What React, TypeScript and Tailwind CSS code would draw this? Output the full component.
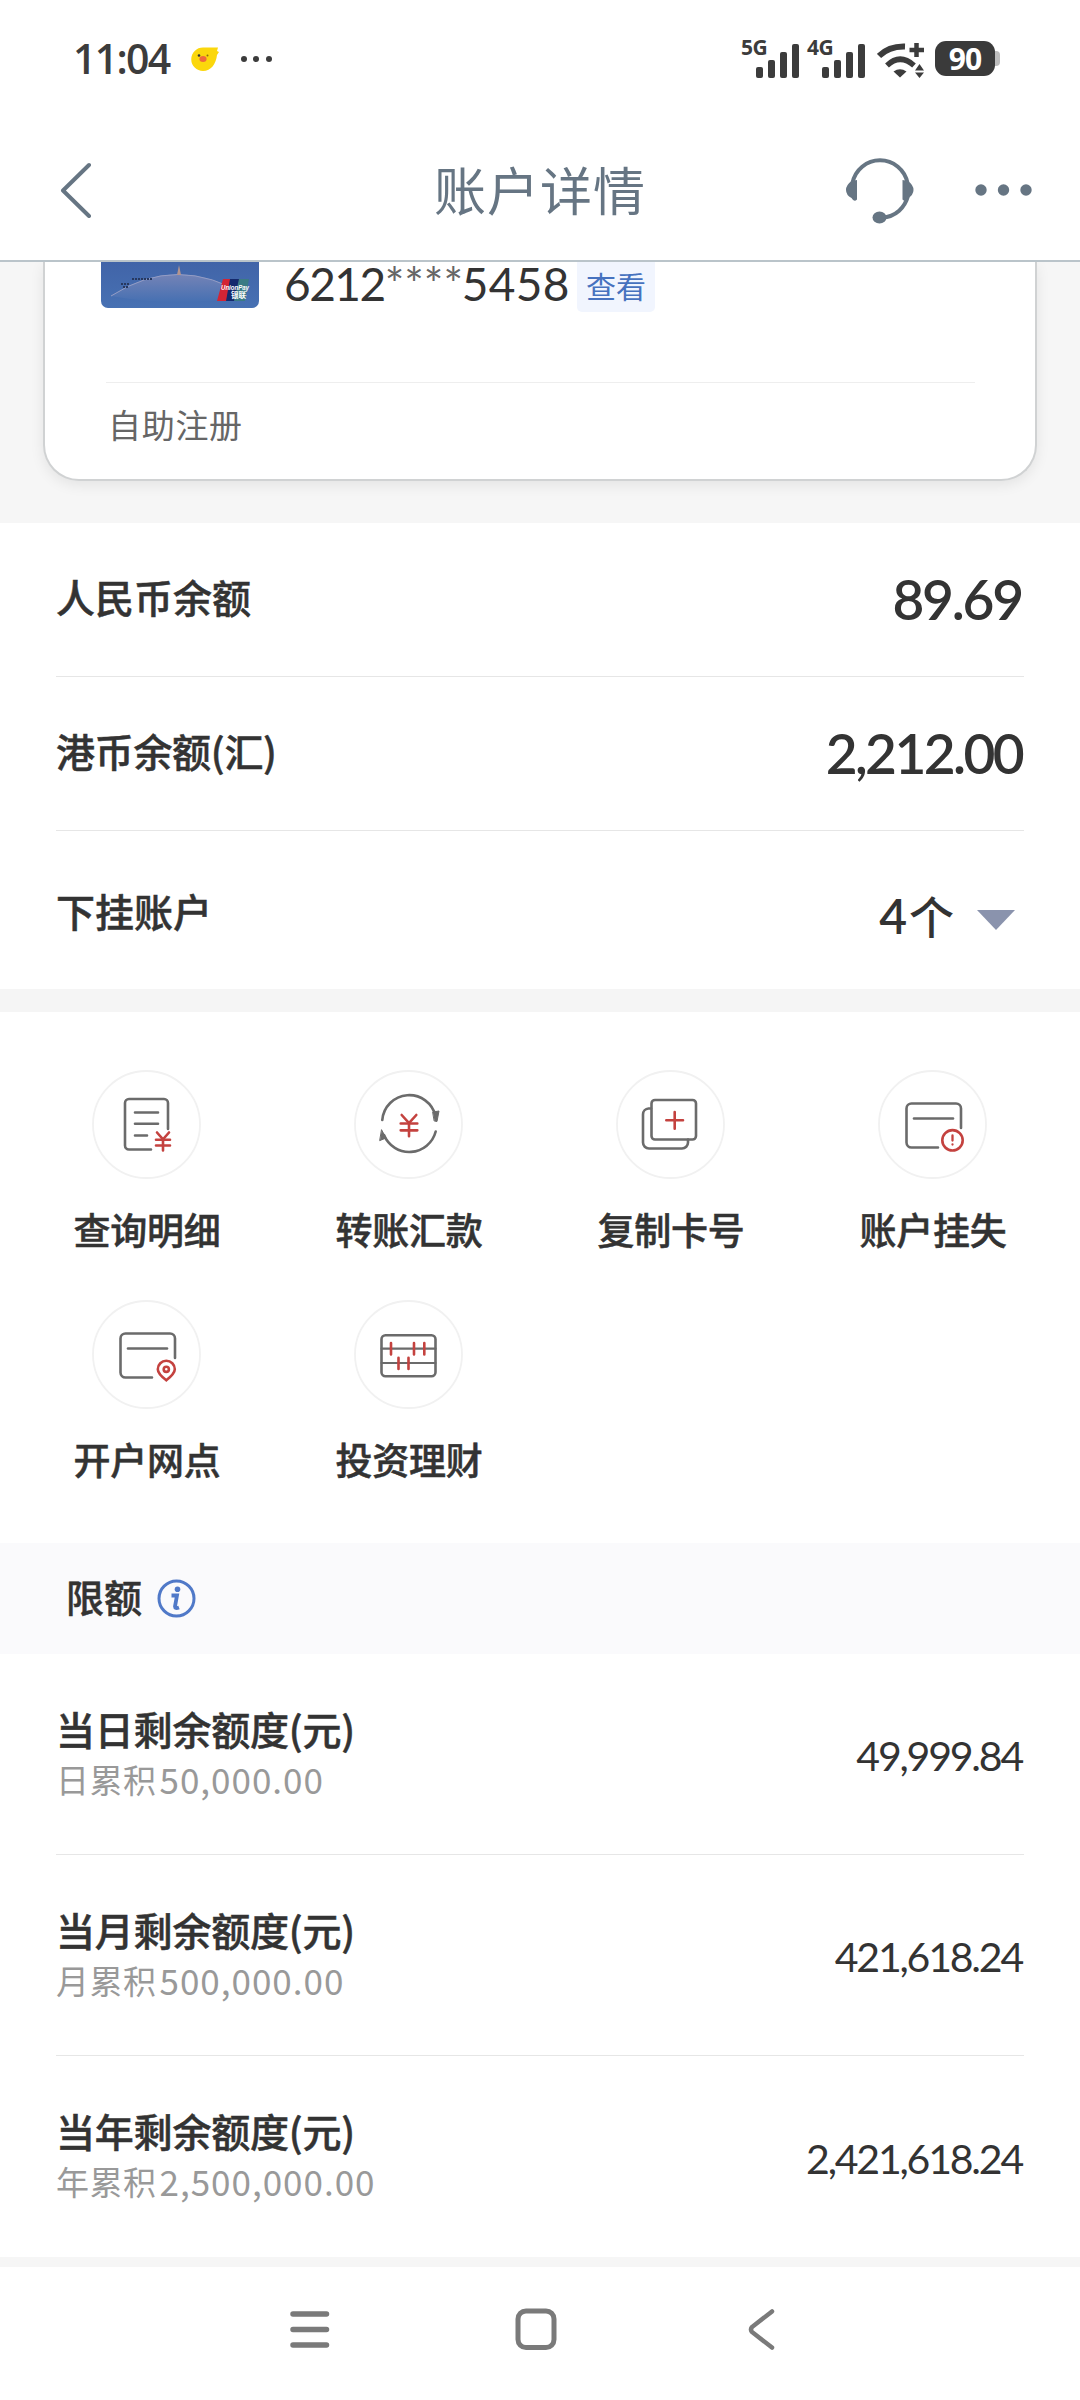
import React from 'react'

const GRAY = '#6b6b6b'
const RED = '#c4423f'

const Yuan = ({ x, y, w, h }: { x: number; y: number; w: number; h: number }) => (
  <g stroke={RED} strokeWidth="2.6" fill="none">
    <path d={`M${x + 1} ${y}L${x + w / 2} ${y + h * 0.38}L${x + w - 1} ${y}M${x + w / 2} ${y + h * 0.38}V${y + h}`} />
    <path d={`M${x} ${y + h * 0.4}H${x + w}M${x} ${y + h * 0.72}H${x + w}`} />
  </g>
)

const CardOutline = () => (
  <>
    <path d="M83 58V38.500a5 5 0 0 0-5-5H33.500a5 5 0 0 0-5 5V72.500a5 5 0 0 0 5 5H60" />
    <path d="M36 48.500H75" />
  </>
)

const actions = [
  {
    label: '查询明细',
    icon: (
      <>
        <path d="M76 59V33a4 4 0 0 0-4-4H37a4 4 0 0 0-4 4V75.500a4 4 0 0 0 4 4H59" />
        <path d="M43 42.500H66M43 53.700H66M43 65.500H55" />
        <Yuan x={64} y={62.5} w={14} h={18} />
      </>
    ),
  },
  {
    label: '转账汇款',
    icon: (
      <>
        <path d="M28.300 50A27 27 0 0 1 81.500 46M81.700 61.500A27.300 27.300 0 0 1 30 65" />
        <path d="M79 42L85 41L83 51.500L80.500 51ZM27.700 60L32 68L26 70.500Z" fill={GRAY} strokeWidth="1" />
        <Yuan x={46.7} y={45} w={16.6} h={21.3} />
      </>
    ),
  },
  {
    label: '复制卡号',
    icon: (
      <>
        <rect x="35.500" y="30" width="44.500" height="39.500" rx="3.500" />
        <path d="M35 38.500H32.500a6 6 0 0 0-5.500 6V72.500a6 6 0 0 0 6 6H66a6 6 0 0 0 6-6V69.500" />
        <path d="M50.300 50.300H67M58.700 42V58.700" stroke={RED} />
      </>
    ),
  },
  {
    label: '账户挂失',
    icon: (
      <>
        <CardOutline />
        <circle cx="74.500" cy="70.300" r="10.200" stroke={RED} strokeWidth="2.600" />
        <path d="M74.500 65.500V70.500M74.500 74.500V74.600" stroke={RED} strokeWidth="2.300" />
      </>
    ),
  },
  {
    label: '开户网点',
    icon: (
      <>
        <CardOutline />
        <path d="M74.300 80.300C70 77 65.800 73 65.800 69.300a8.500 8.500 0 0 1 17 0C82.800 73 78.500 77 74.300 80.300Z" stroke={RED} />
        <circle cx="74.300" cy="69.300" r="2.600" stroke={RED} strokeWidth="2.600" />
      </>
    ),
  },
  {
    label: '投资理财',
    icon: (
      <>
        <rect x="27.500" y="35.300" width="54" height="41" rx="4" />
        <path d="M27.500 48.700H81.500M27.500 63H81.500" strokeWidth="2.200" />
        <path d="M37 43V54.500M60 43V54.500M70.300 43V54.500M44.500 57.700V69M54.500 57.700V69" stroke={RED} />
      </>
    ),
  },
]

const limits = [
  { title: '当日剩余额度(元)', prefix: '日累积', total: '50,000.00', left: '49,999.84' },
  { title: '当月剩余额度(元)', prefix: '月累积', total: '500,000.00', left: '421,618.24' },
  { title: '当年剩余额度(元)', prefix: '年累积', total: '2,500,000.00', left: '2,421,618.24' },
]

const Signal = ({ label }: { label: string }) => (
  <div className="flex h-[38px] w-[59px] items-start">
    <span className="w-[15px] whitespace-nowrap font-['Open_Sans',sans-serif] text-[21px] font-bold leading-[14px] tracking-[-0.500px]">{label}</span>
    <svg width="44" height="38" viewBox="0 0 44 38" fill="#3c3c3c">
      <rect x="0" y="27" width="7" height="11" rx="2" />
      <rect x="12" y="20" width="7" height="18" rx="2" />
      <rect x="24" y="12" width="7" height="26" rx="2" />
      <rect x="36" y="4" width="7" height="34" rx="2" />
    </svg>
  </div>
)

const StatusBar = () => (
  <div className="flex h-[117px] items-center justify-between pl-[73px] pr-[80px] text-[#3c3c3c]">
    <div className="flex items-center">
      <span className="w-[118px] font-['Open_Sans',sans-serif] text-[41px] font-semibold leading-none tracking-[-1.700px]">11:04</span>
      <svg width="28" height="26" viewBox="0 0 28 26">
        <path d="M12 1.500H27L26 5L28 6L26 9C25 18 20 25 12 25A11.700 11.700 0 0 1 12 1.500Z" fill="#fbd70c" />
        <circle cx="8" cy="9.500" r="1.300" fill="#333" />
        <circle cx="16.500" cy="9.500" r="1" fill="#8a6d10" />
        <ellipse cx="12" cy="13" rx="3.600" ry="3" fill="#ee6a3c" />
      </svg>
      <svg className="ml-[21px]" width="32" height="8" viewBox="0 0 32 8" fill="#3c3c3c">
        <circle cx="4" cy="4" r="3" />
        <circle cx="16" cy="4" r="3" />
        <circle cx="29" cy="4" r="3" />
      </svg>
    </div>
    <div className="flex items-center">
      <Signal label="5G" />
      <div className="w-[7px]" />
      <Signal label="4G" />
      <svg className="ml-[11px]" width="49" height="38" viewBox="0 0 49 38" fill="none" stroke="#3c3c3c">
        <path d="M2 16Q12 6 28 6.500" strokeWidth="6" />
        <path d="M10 25.500Q23 13 37 25.500" strokeWidth="5.500" />
        <path d="M16.500 31.500Q23 27 29.500 31.500L23 37.500Z" fill="#3c3c3c" stroke="none" />
        <path d="M39.500 3V17M32.500 10H47" strokeWidth="4.500" />
        <path d="M42.500 24L47 30.500H38ZM42.500 38L47 32.500H38Z" fill="#3c3c3c" stroke="none" />
      </svg>
      <div className="ml-[9px] flex items-center">
        <div className="flex h-[35px] w-[60px] items-center justify-center rounded-[11px] bg-[#3a3a3a] font-['Open_Sans',sans-serif] text-[30px] font-bold leading-none tracking-[-1px] text-white">90</div>
        <div className="h-[15px] w-[5px] rounded-r-[4px] bg-[#bdbdbd]" />
      </div>
    </div>
  </div>
)

const Header = () => (
  <div className="relative z-10 grid h-[145px] grid-cols-[1fr_auto_1fr] items-center border-b-2 border-[#bac4ca] bg-white text-[#667583]">
    <svg className="ml-[60px] mt-[3px]" width="34" height="56" viewBox="0 0 34 56" fill="none" stroke="#667583" strokeWidth="4" strokeLinecap="round" strokeLinejoin="round">
      <path d="M29 3L3 28.500L29 54" />
    </svg>
    <h1 className="text-[52px] font-normal leading-[60px] tracking-[1px]">账户详情</h1>
    <div className="flex items-center justify-end pr-[47px] pt-[2px]">
      <svg width="70" height="68" viewBox="0 0 70 68" fill="none" stroke="#667583" strokeWidth="4">
        <path d="M7.500 27A28 28 0 0 1 62.500 27M63 40C60 51 51 61 37 61.500" />
        <path d="M12 24V43.500Q9 46.500 6.500 42Q1 39 1 34Q1 29 6.500 25ZM57.500 24V43.500Q60.500 46.500 63 42Q68.500 39 68.500 34Q68.500 29 63 25Z" fill="#667583" stroke="none" />
        <ellipse cx="34.500" cy="61.500" rx="7" ry="6" fill="#667583" stroke="none" />
      </svg>
      <svg className="ml-[60px]" width="58" height="12" viewBox="0 0 58 12" fill="#667583">
        <circle cx="6" cy="6" r="5.700" />
        <circle cx="28.500" cy="6" r="5.700" />
        <circle cx="51" cy="6" r="5.700" />
      </svg>
    </div>
  </div>
)

const BankCard = () => (
  <div className="h-[261px] bg-[#f6f6f6] px-[43px]">
    <div className="h-[219px] rounded-b-[36px] border-x-2 border-b-2 border-[#d0d2d3] bg-white pl-[56px] pr-[60px] shadow-[0_4px_14px_rgba(0,0,0,0.08)]">
      <div className="flex h-[120px] items-start">
        <svg className="rounded-b-[7px]" width="158" height="46" viewBox="0 0 158 46">
          <defs>
            <linearGradient id="sky" x1="0" y1="0" x2="0" y2="1">
              <stop offset="0" stopColor="#4164a8" />
              <stop offset="1" stopColor="#4771b3" />
            </linearGradient>
            <linearGradient id="dome" x1="0" y1="0" x2="0" y2="1">
              <stop offset="0" stopColor="#7483b6" />
              <stop offset="1" stopColor="#4670b2" />
            </linearGradient>
          </defs>
          <rect width="158" height="46" fill="url(#sky)" />
          <path d="M10 34Q76 -9 146 34Q76 46 10 34Z" fill="url(#dome)" />
          <path d="M10 34Q76 -9 146 34" fill="none" stroke="#949dc5" strokeWidth="1" />
          <path d="M76 13L78 3L80 13Z" fill="#b4958f" />
          <path d="M20 22H29M22 25H28M31 17H51" stroke="#27385f" strokeWidth="2" strokeDasharray="2 1" />
          <path d="M122 17H131L126 39H116Z" fill="#d32434" />
          <path d="M129 17H139L134 39H125Z" fill="#15296c" />
          <path d="M138 17H148L144 39H133Z" fill="#3b7b84" />
          <text x="120" y="28" fill="#fff" fontSize="8" fontWeight="700" fontStyle="italic" fontFamily="Liberation Sans" textLength="28" lengthAdjust="spacingAndGlyphs">UnionPay</text>
          <text x="130" y="36" fill="#fff" fontSize="7.500" fontWeight="700" fontFamily="Noto Sans CJK SC">银联</text>
        </svg>
        <div className="ml-[25px] flex font-['Lato',sans-serif] text-[46px] leading-[43px] text-[#333]">
          <span className="tracking-[-1.500px]">6212</span>
          <span className="w-[77px] text-[#666]">****</span>
          <span className="grow tracking-[0.300px]">5458</span>
        </div>
        <span className="ml-auto mr-[320px] flex h-[50px] w-[78px] items-center justify-center rounded-b-[5px] bg-[#f1f5fe] pb-[4px] text-[30px] leading-none text-[#4672bf]">查看</span>
      </div>
      <div className="ml-[5px] border-t border-[#eeeeee] pl-[2px] pt-[19px] text-[33px] leading-[44px] tracking-[0.700px] text-[#666]">自助注册</div>
    </div>
  </div>
)

const Balances = () => (
  <div className="px-[56px] text-[39px] font-medium text-[#333]">
    <div className="flex h-[154px] items-center justify-between border-b border-[#e6e6e6]">
      <span className="pb-[6px] [-webkit-text-stroke:0.500px]">人民币余额</span>
      <span className="pr-[2px] font-['Lato',sans-serif] text-[55px] font-semibold tracking-[-2.200px]">89.69</span>
    </div>
    <div className="flex h-[154px] items-center justify-between border-b border-[#e6e6e6]">
      <span className="pb-[6px] tracking-[-0.300px] [-webkit-text-stroke:0.500px]">港币余额(汇)</span>
      <span className="pr-[2px] font-['Lato',sans-serif] text-[55px] font-semibold tracking-[-2.600px]">2,212.00</span>
    </div>
    <div className="flex h-[158px] items-center justify-between">
      <span className="[-webkit-text-stroke:0.500px]">下挂账户</span>
      <div className="flex items-center pr-[9px] pt-[11px]">
        <span className="font-['Lato',sans-serif] text-[48px] font-semibold leading-none">4</span>
        <span className="ml-[2px] text-[45px] leading-none">个</span>
        <svg className="ml-[23px] mt-[9px]" width="38" height="20" viewBox="0 0 38 20">
          <path d="M0 0H38L19 20Z" fill="#8a93ad" />
        </svg>
      </div>
    </div>
  </div>
)

const Actions = () => (
  <div className="grid h-[554px] grid-cols-4 content-start gap-y-[46px] border-t-[23px] border-[#f5f5f5] px-[16px] pt-[58px]">
    {actions.map((a) => (
      <div key={a.label} className="flex h-[184px] flex-col items-center">
        <svg className="-ml-[1px]" width="109" height="109" viewBox="0 0 109 109" fill="none" stroke={GRAY} strokeWidth="2.600" strokeLinecap="round">
          <circle cx="54.500" cy="54.500" r="53.500" stroke="#f1f1f1" strokeWidth="1.800" />
          {a.icon}
        </svg>
        <span className="mt-[27px] text-[37px] font-medium leading-[46px] tracking-[-0.200px] text-[#333] [-webkit-text-stroke:0.500px]">{a.label}</span>
      </div>
    ))}
  </div>
)

const Limits = () => (
  <div>
    <div className="flex h-[111px] items-center bg-[#fafafc] pl-[66px] text-[38px] font-medium text-[#333]">
      <span className="pb-[6px] [-webkit-text-stroke:0.500px]">限额</span>
      <svg className="ml-[15px]" width="39" height="39" viewBox="0 0 39 39" fill="none" stroke="#5079c8" strokeWidth="3">
        <circle cx="19.500" cy="19.500" r="17.500" />
        <circle cx="20.500" cy="10.300" r="2.800" fill="#5079c8" stroke="none" />
        <path d="M14.500 16.500H20L18 27.500Q18 30 22 28.500" strokeWidth="3.800" />
      </svg>
    </div>
    <div className="px-[56px]">
      {limits.map((l) => (
        <div key={l.title} className="flex h-[201px] items-center justify-between border-b border-[#e6e6e6] last:border-0">
          <div className="flex flex-col pb-[5px]">
            <span className="text-[39px] font-medium leading-[54px] tracking-[-0.200px] text-[#333] [-webkit-text-stroke:0.500px]">{l.title}</span>
            <span className="flex text-[33px] leading-[48px] tracking-[0.500px] text-[#999]">
              {l.prefix}
              <span className="ml-[3px] text-[35px] tracking-[1px]">{l.total}</span>
            </span>
          </div>
          <span className="pr-[2px] pt-[4px] font-['Lato',sans-serif] text-[41px] tracking-[-2.200px] text-[#333]">{l.left}</span>
        </div>
      ))}
    </div>
    <div className="h-[10px] bg-[#f6f6f6]" />
  </div>
)

const NavBar = () => (
  <div className="flex h-[133px] items-start pl-[289px] pt-[40px]">
    <svg width="42" height="44" viewBox="0 0 42 44" stroke="#7a7a7a" strokeWidth="5.500" strokeLinecap="round">
      <path d="M4 7H37.500M4 22.500H37.500M4 38H37.500" />
    </svg>
    <svg className="ml-[184px]" width="42" height="44" viewBox="0 0 42 44" fill="none" stroke="#7a7a7a" strokeWidth="5">
      <rect x="3" y="4" width="36" height="36.500" rx="8" />
    </svg>
    <svg className="ml-[190px]" width="28" height="44" viewBox="0 0 28 44" fill="none" stroke="#7a7a7a" strokeWidth="4.500" strokeLinecap="round">
      <path d="M25 4.500L5 20Q3 22.500 5 25L25 40.500" />
    </svg>
  </div>
)

const App = () => {
  return (
    <main className="h-[2400px] w-[1080px] overflow-hidden bg-white font-['Noto_Sans_CJK_SC',sans-serif]">
      <StatusBar />
      <Header />
      <BankCard />
      <Balances />
      <Actions />
      <Limits />
      <NavBar />
    </main>
  )
}

export default App
